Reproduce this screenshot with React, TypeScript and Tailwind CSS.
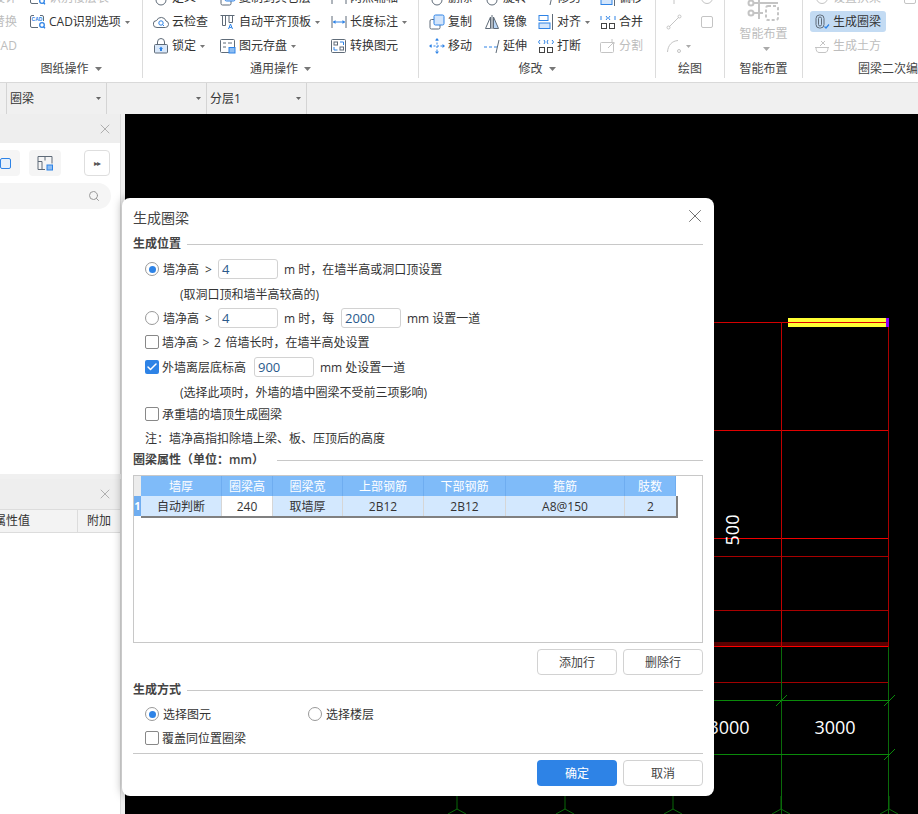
import type { ReactNode } from "react";
import { Check, Search, X } from "lucide-react";

const BLUE = "#2e83e6";
const GRAY = "#5f6b78";
const FAINT = "#c4c4c4";

function Caret({ color = "#777", small }: { color?: string; small?: boolean }) {
  return small ? (
    <svg width="5" height="3" viewBox="0 0 5 3" className="ml-[4px] shrink-0">
      <path d="M0 0h5L2.5 3z" fill={color} />
    </svg>
  ) : (
    <svg width="7" height="4" viewBox="0 0 7 4" className="ml-[6px] shrink-0">
      <path d="M0 0h7L3.5 4z" fill={color} />
    </svg>
  );
}

function Glyph({ children }: { children: ReactNode }) {
  return (
    <svg width="16" height="16" viewBox="0 0 16 16" fill="none" strokeWidth="1" className="shrink-0">
      {children}
    </svg>
  );
}

const icons: Record<string, ReactNode> = {
  cad: (
    <>
      <path d="M4 1.5H2a1.5 1.5 0 0 0-1.5 1.5v9A1.5 1.5 0 0 0 2 13.5h6M10 1.5h2A1.5 1.5 0 0 1 13.5 3v4" stroke={GRAY} />
      <text x="7" y="7" fontSize="5" fontWeight="700" fill={BLUE} textAnchor="middle" fontFamily="Liberation Sans, sans-serif">CAD</text>
      <circle cx="12" cy="11" r="2.3" stroke={BLUE} strokeWidth="1.3" fill="#fff" />
      <path d="M13.6 12.8l1.4 1.4" stroke={BLUE} strokeWidth="1.3" />
    </>
  ),
  cloud: (
    <>
      <path d="M4 13.5a3.5 3.5 0 0 1-.4-7A5 5 0 0 1 13 7a3.3 3.3 0 0 1-.5 6.5z" stroke={GRAY} />
      <circle cx="8" cy="9" r="2.2" stroke={BLUE} />
      <path d="M9.6 10.6l1.4 1.4" stroke={BLUE} />
    </>
  ),
  lock: (
    <>
      <rect x="1.5" y="6.5" width="13" height="8.5" rx="1" fill="#d9e8fa" stroke={GRAY} />
      <path d="M4.5 6.5V4a3.5 3.5 0 0 1 7 0v2.5" stroke={GRAY} />
      <path d="M8 8.5l2 2.5H9v2H7v-2H6z" fill={BLUE} />
    </>
  ),
  align: (
    <>
      <path d="M0.5 1.5h14" stroke={GRAY} />
      <path d="M2.5 2v9.5M5.5 2v9.5M2.5 11.5h3M9 2v6.5h3.5V2" stroke={GRAY} />
      <path d="M8.5 15l2-5 2 5M9.3 13.4h2.4" stroke={BLUE} />
    </>
  ),
  save: (
    <>
      <rect x="0.5" y="1.5" width="14" height="13" rx="1" stroke={GRAY} />
      <path d="M3 5h3M8 5h4M3 9h3" stroke={GRAY} />
      <rect x="9" y="9.5" width="6" height="5.5" fill="#8dbdf2" stroke={BLUE} />
    </>
  ),
  plan: (
    <>
      <path d="M1 14.5V1.5h14v7M1 6.5h4v8M8 1.5v4M1 14.5h7" stroke={GRAY} />
      <rect x="10" y="10" width="5.5" height="5" fill="#8dbdf2" stroke={BLUE} />
    </>
  ),
  measure: (
    <>
      <path d="M1 2v12M15 2v12" stroke={GRAY} />
      <path d="M2 8h12" stroke={BLUE} />
      <path d="M2 8l2.5-2v4zM14 8l-2.5-2v4z" fill={BLUE} />
    </>
  ),
  convert: (
    <>
      <rect x="0.5" y="1.5" width="14" height="13" rx="1" stroke={GRAY} />
      <rect x="3" y="4" width="3.5" height="3" stroke={GRAY} />
      <rect x="9" y="9" width="3.5" height="3" stroke={GRAY} />
      <path d="M9 4h3.5v3M6.5 12H3V9" stroke={BLUE} />
    </>
  ),
  copy: (
    <>
      <rect x="1" y="5.5" width="10" height="9.5" rx="1.5" stroke={GRAY} />
      <rect x="5" y="1" width="10" height="10" rx="1.5" fill="#d3e5fb" stroke={BLUE} />
    </>
  ),
  mirror: (
    <>
      <path d="M8 1v14" stroke={GRAY} />
      <path d="M6.5 3L1.5 14.5h5z" stroke={GRAY} />
      <path d="M9.5 3l5 11.5h-5z" fill="#b9d6f6" stroke={GRAY} />
    </>
  ),
  alignBlocks: (
    <>
      <rect x="1" y="1.5" width="9" height="5" stroke={BLUE} />
      <rect x="1" y="9" width="11" height="5.5" fill="#d3e5fb" stroke={BLUE} />
      <path d="M14.5 0v16" stroke={GRAY} />
    </>
  ),
  merge: (
    <>
      <rect x="1.5" y="9.5" width="5" height="5" stroke="#444" />
      <rect x="9.5" y="9.5" width="5" height="5" stroke="#444" />
      <path d="M1 2v4M6 2l1.5 2L6 6M15 2v4M10 2L8.5 4 10 6" stroke={BLUE} />
    </>
  ),
  move: (
    <>
      <path d="M8 1v14M1 8h14" stroke={BLUE} strokeDasharray="2 1.5" />
      <path d="M8 0l2 2.5H6zM8 16l2-2.5H6zM0 8l2.5 2V6zM16 8l-2.5 2V6z" fill={BLUE} />
    </>
  ),
  extend: (
    <>
      <path d="M0 9h3M5 9h3M10 9h3" stroke={BLUE} />
      <path d="M15 2l-3 13" stroke={GRAY} />
    </>
  ),
  breakUp: (
    <>
      <rect x="1.5" y="9.5" width="5" height="5" stroke="#444" />
      <rect x="9.5" y="9.5" width="5" height="5" stroke="#444" />
      <path d="M2 2L0.5 4 2 6M6 2l1 2-1 2M10 2L9 4l1 2M14 2l1.5 2L14 6" stroke={BLUE} />
    </>
  ),
  split: (
    <>
      <rect x="0.5" y="4.5" width="13" height="10" rx="1" stroke={FAINT} />
      <path d="M8 10l6-6M12 1v4h3" stroke={FAINT} />
    </>
  ),
  line: (
    <>
      <path d="M3 13L13 3" stroke={FAINT} />
      <circle cx="2.5" cy="13.5" r="1.5" stroke={FAINT} />
      <circle cx="13.5" cy="2.5" r="1.5" stroke={FAINT} />
    </>
  ),
  tick: <path d="M8 0v14" stroke={FAINT} />,
  rect: <rect x="2.5" y="2.5" width="11" height="11" rx="1.5" stroke={FAINT} />,
  arc: (
    <>
      <path d="M1.5 14C2 7 6 3 12 2.5" stroke={FAINT} />
      <circle cx="13" cy="13" r="1.5" stroke={FAINT} />
    </>
  ),
  ring: (
    <>
      <rect x="2" y="1" width="8" height="13" rx="3.5" stroke={GRAY} />
      <rect x="4.5" y="3" width="3" height="9" rx="1.5" stroke={GRAY} />
      <path d="M10.5 12.5l1.5 1.5 3-3.5" stroke={BLUE} strokeWidth="1.2" />
    </>
  ),
  earth: (
    <>
      <path d="M1 9.5h14M2 9.5c0 3 1 5 3 5h6c2 0 3-2 3-5" stroke={FAINT} />
      <path d="M6 8l5-5M7 3l4 4" stroke={FAINT} />
    </>
  ),
  blank: <circle cx="8" cy="10" r="5" stroke={GRAY} />,
  faintDot: <circle cx="8" cy="8" r="5.5" stroke={FAINT} />,
};

function Tool({ icon, label, caret, dim }: { icon?: string; label: string; caret?: boolean; dim?: boolean }) {
  return (
    <div className={`flex h-[24px] items-center whitespace-nowrap ${dim ? "text-[#bdbdbd]" : "text-[#333]"}`}>
      {icon && <Glyph>{icons[icon]}</Glyph>}
      <span className="ml-[3px]">{label}</span>
      {caret && <Caret small />}
    </div>
  );
}

function RibbonGroup({ title, width, caret, children }: { title: string; width: string; caret?: boolean; children: ReactNode }) {
  return (
    <div className={`h-[78px] shrink-0 overflow-hidden border-r border-[#dcdcdc] ${width}`}>
      <div className="-mt-[14px] flex h-[72px]">{children}</div>
      <div className="flex h-[22px] items-center justify-center text-[#444]">
        {title}
        {caret && <Caret />}
      </div>
    </div>
  );
}

function Ribbon() {
  return (
    <div className="flex h-[83px] overflow-hidden border-b border-[#d9d9d9] bg-white">
      <RibbonGroup title="图纸操作" width="w-[143px]" caret>
        <div className="-ml-[10px] w-[40px]">
          <Tool label="设计" dim />
          <Tool label="替换" dim />
          <Tool label="CAD" dim />
        </div>
        <div>
          <Tool icon="cad" label="识别楼层表" dim />
          <Tool icon="cad" label="CAD识别选项" caret />
        </div>
      </RibbonGroup>
      <RibbonGroup title="通用操作" width="w-[276px]" caret>
        <div className="ml-[10px] w-[67px]">
          <Tool icon="blank" label="定义" />
          <Tool icon="cloud" label="云检查" />
          <Tool icon="lock" label="锁定" caret />
        </div>
        <div className="w-[111px]">
          <Tool icon="copy" label="复制到其它层" />
          <Tool icon="align" label="自动平齐顶板" caret />
          <Tool icon="save" label="图元存盘" caret />
        </div>
        <div>
          <Tool icon="measure" label="两点辅轴" />
          <Tool icon="measure" label="长度标注" caret />
          <Tool icon="convert" label="转换图元" />
        </div>
      </RibbonGroup>
      <RibbonGroup title="修改" width="w-[237px]" caret>
        <div className="ml-[10px] w-[55px]">
          <Tool icon="blank" label="删除" />
          <Tool icon="copy" label="复制" />
          <Tool icon="move" label="移动" />
        </div>
        <div className="w-[54px]">
          <Tool icon="blank" label="旋转" />
          <Tool icon="mirror" label="镜像" />
          <Tool icon="extend" label="延伸" />
        </div>
        <div className="w-[62px]">
          <Tool icon="extend" label="修剪" />
          <Tool icon="alignBlocks" label="对齐" caret />
          <Tool icon="breakUp" label="打断" />
        </div>
        <div>
          <Tool icon="alignBlocks" label="偏移" />
          <Tool icon="merge" label="合并" />
          <Tool icon="split" label="分割" dim />
        </div>
      </RibbonGroup>
      <RibbonGroup title="绘图" width="w-[69px]">
        <div className="ml-[10px] w-[33px]">
          <div className="flex h-[24px] items-center"><Glyph>{icons.tick}</Glyph></div>
          <div className="flex h-[24px] items-center"><Glyph>{icons.line}</Glyph></div>
          <div className="flex h-[24px] items-center"><Glyph>{icons.arc}</Glyph><Caret small color="#aaa" /></div>
        </div>
        <div>
          <div className="flex h-[24px] items-center"><Glyph>{icons.faintDot}</Glyph></div>
          <div className="flex h-[24px] items-center"><Glyph>{icons.rect}</Glyph></div>
        </div>
      </RibbonGroup>
      <RibbonGroup title="智能布置" width="w-[78px]">
        <div className="flex w-full flex-col items-center">
          <svg width="34" height="30" viewBox="0 0 34 30" fill="none" stroke={FAINT} strokeWidth="2" className="mt-[8px] shrink-0">
            <circle cx="4" cy="9" r="2.5" />
            <circle cx="4" cy="19" r="2.5" />
            <path d="M7 9h24M7 19h9M12 3v22" />
            <rect x="19" y="12" width="12" height="14" rx="2" strokeDasharray="3 2" />
          </svg>
          <span className="mt-[1px] leading-[17px] text-[#bdbdbd]">智能布置</span>
          <div className="mt-[5px]"><Caret color="#aaa" /></div>
        </div>
      </RibbonGroup>
      <div className="w-[116px] shrink-0">
        <div className="-mt-[14px] ml-[7px] flex h-[72px]">
          <div className="w-[92px]">
            <div className="pl-[4px]"><Tool icon="faintDot" label="设置拱梁" dim /></div>
            <div className="mt-[1px] flex h-[21px] w-[76px] items-center rounded-[3px] bg-[#c3dbf3] pl-[4px]">
              <Tool icon="ring" label="生成圈梁" />
            </div>
            <div className="mt-[2px] pl-[4px]"><Tool icon="earth" label="生成土方" dim /></div>
          </div>
          <div className="flex h-[24px] items-center"><Glyph>{icons.rect}</Glyph></div>
        </div>
        <div className="flex h-[22px] items-center whitespace-nowrap pl-[55px] text-[#444]">圈梁二次编辑</div>
      </div>
    </div>
  );
}

function Selector({ label }: { label?: string }) {
  return (
    <div className="flex h-full w-[100px] items-center justify-between border-r border-[#d4d4d4] pl-[3px] pr-[5px] text-[#333]">
      <span>{label}</span>
      <Caret small color="#666" />
    </div>
  );
}

function SidePanels() {
  return (
    <div className="flex w-[125px] shrink-0 flex-col bg-[#f0f0f0] pr-[4px]">
      <div className="flex h-[360px] flex-col border-r border-[#dcdcdc] bg-white">
        <div className="flex h-[29px] items-center justify-end bg-[#eeeeee] pr-[7px]">
          <X size={16} strokeWidth={1.4} color="#aaa" />
        </div>
        <div className="mt-[7px] flex h-[26px]">
          <div className="flex w-[20px] items-center justify-end rounded-r-[4px] bg-[#f5f5f5] pr-[9px]">
            <div className="h-[11px] w-[11px] shrink-0 rounded-[2px] border border-[#2e83e6] bg-[#e6f0fb]" />
          </div>
          <div className="ml-[9px] flex w-[32px] items-center justify-center rounded-[4px] bg-[#f5f5f5]">
            <Glyph>{icons.plan}</Glyph>
          </div>
          <div className="ml-[23px] flex w-[26px] items-center justify-center rounded-[4px] border border-[#dedede] text-[8px] tracking-[-1px] text-[#555]">
            ▸▸
          </div>
        </div>
        <div className="mt-[7px] flex h-[26px] w-[111px] items-center justify-end rounded-r-[13px] bg-[#f5f5f5] pr-[11px]">
          <Search size={12} color="#999" />
        </div>
      </div>
      <div className="mt-[5px] flex min-h-0 flex-1 flex-col border-r border-[#dcdcdc] bg-white">
        <div className="flex h-[30px] shrink-0 items-center justify-end bg-[#eeeeee] pr-[7px]">
          <X size={16} strokeWidth={1.4} color="#aaa" />
        </div>
        <div className="flex h-[24px] shrink-0 items-center border-y border-[#dcdcdc] bg-[#f3f3f3] text-[#333]">
          <div className="-ml-[6px] w-[84px] border-r border-[#dcdcdc] leading-[22px]">属性值</div>
          <div className="pl-[9px]">附加</div>
        </div>
      </div>
    </div>
  );
}

function Drawing() {
  const hLines: [number, string][] = [
    [322.5, "#d40000"],
    [430.5, "#e00000"],
    [538.5, "#f00000"],
    [556.5, "#a80000"],
    [610.5, "#a80000"],
    [646.5, "#ff0000"],
    [682.5, "#a00000"],
  ];
  return (
    <svg width="793" height="700" viewBox="125 114 793 700" className="block" shapeRendering="crispEdges">
      {hLines.map(([y, c]) => (
        <line key={y} x1="700" x2="889" y1={y} y2={y} stroke={c} />
      ))}
      <rect x="700" y="642" width="189" height="4" fill="#5a0000" />
      <rect x="788" y="318" width="98" height="9" fill="#ffff33" />
      <line x1="788" x2="886" y1="322.5" y2="322.5" stroke="#e00000" />
      <rect x="886" y="318" width="3" height="9" fill="#8a00ff" />
      <line x1="781.5" x2="781.5" y1="322" y2="647" stroke="#c00000" />
      <line x1="888.5" x2="888.5" y1="327" y2="647" stroke="#a80000" />
      <line x1="781.5" x2="781.5" y1="647" y2="814" stroke="#0a6a0a" />
      <line x1="888.5" x2="888.5" y1="647" y2="814" stroke="#0a6a0a" />
      <line x1="700" x2="889" y1="700.5" y2="700.5" stroke="#0a8a0a" />
      <line x1="700" x2="889" y1="754.5" y2="754.5" stroke="#0a8a0a" />
      <g shapeRendering="auto" stroke="#0a8a0a" fill="none">
        <path d="M776 706l11-11M884 706l11-11M884 760l11-11" />
        {[457, 565, 673, 781, 889].map((x) => (
          <path key={x} stroke="#0a6a0a" d={`M${x} 796v13M${x - 9} 814l9-5 9 5`} />
        ))}
      </g>
      <text x="835" y="734" fill="#fff" fontSize="18" textAnchor="middle" fontFamily="Open Sans, sans-serif">3000</text>
      <text x="729" y="734" fill="#fff" fontSize="18" textAnchor="middle" fontFamily="Open Sans, sans-serif">3000</text>
      <text x="0" y="0" fill="#fff" fontSize="18" textAnchor="middle" fontFamily="Open Sans, sans-serif" transform="translate(739 530) rotate(-90)">500</text>
    </svg>
  );
}

function Radio({ on }: { on?: boolean }) {
  return (
    <span className="flex h-[14px] w-[14px] shrink-0 items-center justify-center rounded-full border border-[#999] bg-white">
      {on && <span className="h-[7px] w-[7px] rounded-full bg-[#2e83e6]" />}
    </span>
  );
}

function Box({ on }: { on?: boolean }) {
  return on ? (
    <span className="flex h-[14px] w-[14px] shrink-0 items-center justify-center rounded-[2px] bg-[#2e83e6]">
      <Check size={12} strokeWidth={3} color="#fff" />
    </span>
  ) : (
    <span className="h-[14px] w-[14px] shrink-0 rounded-[2px] border border-[#888] bg-white" />
  );
}

function Field({ value }: { value: string }) {
  return (
    <span className="flex h-[20px] w-[60px] shrink-0 items-center rounded-[3px] border border-[#d2d2d2] pl-[3px] pt-[2px] text-[13px] text-[#2a5a8c]">
      {value}
    </span>
  );
}

function Label({ className = "", children }: { className?: string; children: ReactNode }) {
  return <span className={`pt-[2px] whitespace-nowrap ${className}`}>{children}</span>;
}

function Row({ className = "", children }: { className?: string; children: ReactNode }) {
  return <div className={`flex h-[20px] items-center pl-[12px] text-[#333] ${className}`}>{children}</div>;
}

function Section({ title, lineFrom, className = "" }: { title: string; lineFrom: string; className?: string }) {
  return (
    <div className={`flex h-[16px] items-center font-semibold text-[#444] ${className}`}>
      <span className="whitespace-nowrap">{title}</span>
      <div className={`h-px flex-1 bg-[#c8c8c8] ${lineFrom}`} />
    </div>
  );
}

function Btn({ label, primary }: { label: string; primary?: boolean }) {
  return (
    <div
      className={`flex h-[26px] w-[80px] items-center justify-center rounded-[4px] pt-[2px] ${
        primary ? "bg-[#2e83e6] text-white" : "border border-[#d2d2d2] bg-white text-[#444]"
      }`}
    >
      {label}
    </div>
  );
}

const COLS = [
  { head: "墙厚", cell: "自动判断", w: "w-[81px]" },
  { head: "圈梁高", cell: "240", w: "w-[51px]", white: true },
  { head: "圈梁宽", cell: "取墙厚", w: "w-[70px]" },
  { head: "上部钢筋", cell: "2B12", w: "w-[81px]" },
  { head: "下部钢筋", cell: "2B12", w: "w-[82px]" },
  { head: "箍筋", cell: "A8@150", w: "w-[119px]" },
  { head: "肢数", cell: "2", w: "w-[51px]" },
];

function BeamTable() {
  return (
    <div className="mt-[7px] h-[168px] border border-[#c8c8c8] bg-white">
      <div className="flex h-[20px]">
        <div className="w-[7px] bg-[#ececec]" />
        {COLS.map((c) => (
          <div key={c.head} className={`flex items-center justify-center border-r border-[#6fadf0] bg-[#7fbbf9] pt-[2px] text-white ${c.w}`}>
            {c.head}
          </div>
        ))}
      </div>
      <div className="flex h-[22px]">
        <div className="flex h-[20px] w-[7px] items-center justify-center bg-[#6fadf0] text-[11px] font-bold text-white">1</div>
        <div className="flex border-r-2 border-b-2 border-[#808080]">
          {COLS.map((c) => (
            <div
              key={c.head}
              className={`flex h-[20px] items-center justify-center border-r border-[#d6d6d6] pt-[2px] text-[#333] last:border-r-0 ${c.w} ${
                c.white ? "bg-white" : "bg-[#d3e8fe]"
              }`}
            >
              {c.cell}
            </div>
          ))}
        </div>
      </div>
    </div>
  );
}

function BeamDialog() {
  return (
    <div className="absolute left-[122px] top-[198px] h-[598px] w-[592px] rounded-[8px] bg-white px-[11px] shadow-[0_0_10px_rgba(0,0,0,0.35)]">
      <div className="flex h-[38px] items-center justify-between">
        <span className="text-[14px] text-[#444]">生成圈梁</span>
        <X size={22} strokeWidth={1} color="#666" className="-mr-[3px] mb-[2px]" />
      </div>
      <Section title="生成位置" lineFrom="ml-[6px]" />
      <Row className="mt-[7px]">
        <Radio on />
        <Label className="ml-[4px] w-[55px] [word-spacing:3px]">墙净高 &gt;</Label>
        <Field value="4" />
        <Label className="ml-[6px]">m 时，在墙半高或洞口顶设置</Label>
      </Row>
      <Row className="mt-[5px] pl-[47px]">
        <Label>(取洞口顶和墙半高较高的)</Label>
      </Row>
      <Row className="mt-[4px]">
        <Radio />
        <Label className="ml-[4px] w-[55px] [word-spacing:3px]">墙净高 &gt;</Label>
        <Field value="4" />
        <Label className="ml-[6px] w-[57px]">m 时，每</Label>
        <Field value="2000" />
        <Label className="ml-[6px]">mm 设置一道</Label>
      </Row>
      <Row className="mt-[4px]">
        <Box />
        <Label className="ml-[3px] [word-spacing:1.5px]">墙净高 &gt; 2 倍墙长时，在墙半高处设置</Label>
      </Row>
      <Row className="mt-[5px]">
        <Box on />
        <Label className="ml-[3px] w-[92px]">外墙离层底标高</Label>
        <Field value="900" />
        <Label className="ml-[6px]">mm 处设置一道</Label>
      </Row>
      <Row className="mt-[5px] pl-[47px]">
        <Label>(选择此项时，外墙的墙中圈梁不受前三项影响)</Label>
      </Row>
      <Row className="mt-[2px]">
        <Box />
        <Label className="ml-[3px]">承重墙的墙顶生成圈梁</Label>
      </Row>
      <Row className="mt-[4px]">
        <Label>注：墙净高指扣除墙上梁、板、压顶后的高度</Label>
      </Row>
      <Section title="圈梁属性（单位：mm）" lineFrom="ml-[13px]" className="mt-[4px]" />
      <BeamTable />
      <div className="mt-[6px] flex justify-end gap-[6px]">
        <Btn label="添加行" />
        <Btn label="删除行" />
      </div>
      <Section title="生成方式" lineFrom="ml-[6px]" className="mt-[7px]" />
      <Row className="mt-[6px]">
        <Radio on />
        <Label className="ml-[4px] w-[145px]">选择图元</Label>
        <Radio />
        <Label className="ml-[4px]">选择楼层</Label>
      </Row>
      <Row className="mt-[4px]">
        <Box />
        <Label className="ml-[3px]">覆盖同位置圈梁</Label>
      </Row>
      <div className="mt-[5px] h-px bg-[#c8c8c8]" />
      <div className="mt-[6px] flex justify-end gap-[6px]">
        <Btn label="确定" primary />
        <Btn label="取消" />
      </div>
    </div>
  );
}

export default function App() {
  return (
    <div className="relative flex h-[814px] w-[918px] flex-col overflow-hidden bg-white font-['Open_Sans','Noto_Sans_CJK_SC',sans-serif] text-[12px]">
      <Ribbon />
      <div className="flex h-[31px] shrink-0 items-center bg-[#f0f0f0]">
        <div className="h-full w-[7px] border-r border-[#d4d4d4]" />
        <Selector label="圈梁" />
        <Selector />
        <Selector label="分层1" />
      </div>
      <div className="flex min-h-0 flex-1">
        <SidePanels />
        <div className="flex-1 bg-black">
          <Drawing />
        </div>
      </div>
      <BeamDialog />
    </div>
  );
}
